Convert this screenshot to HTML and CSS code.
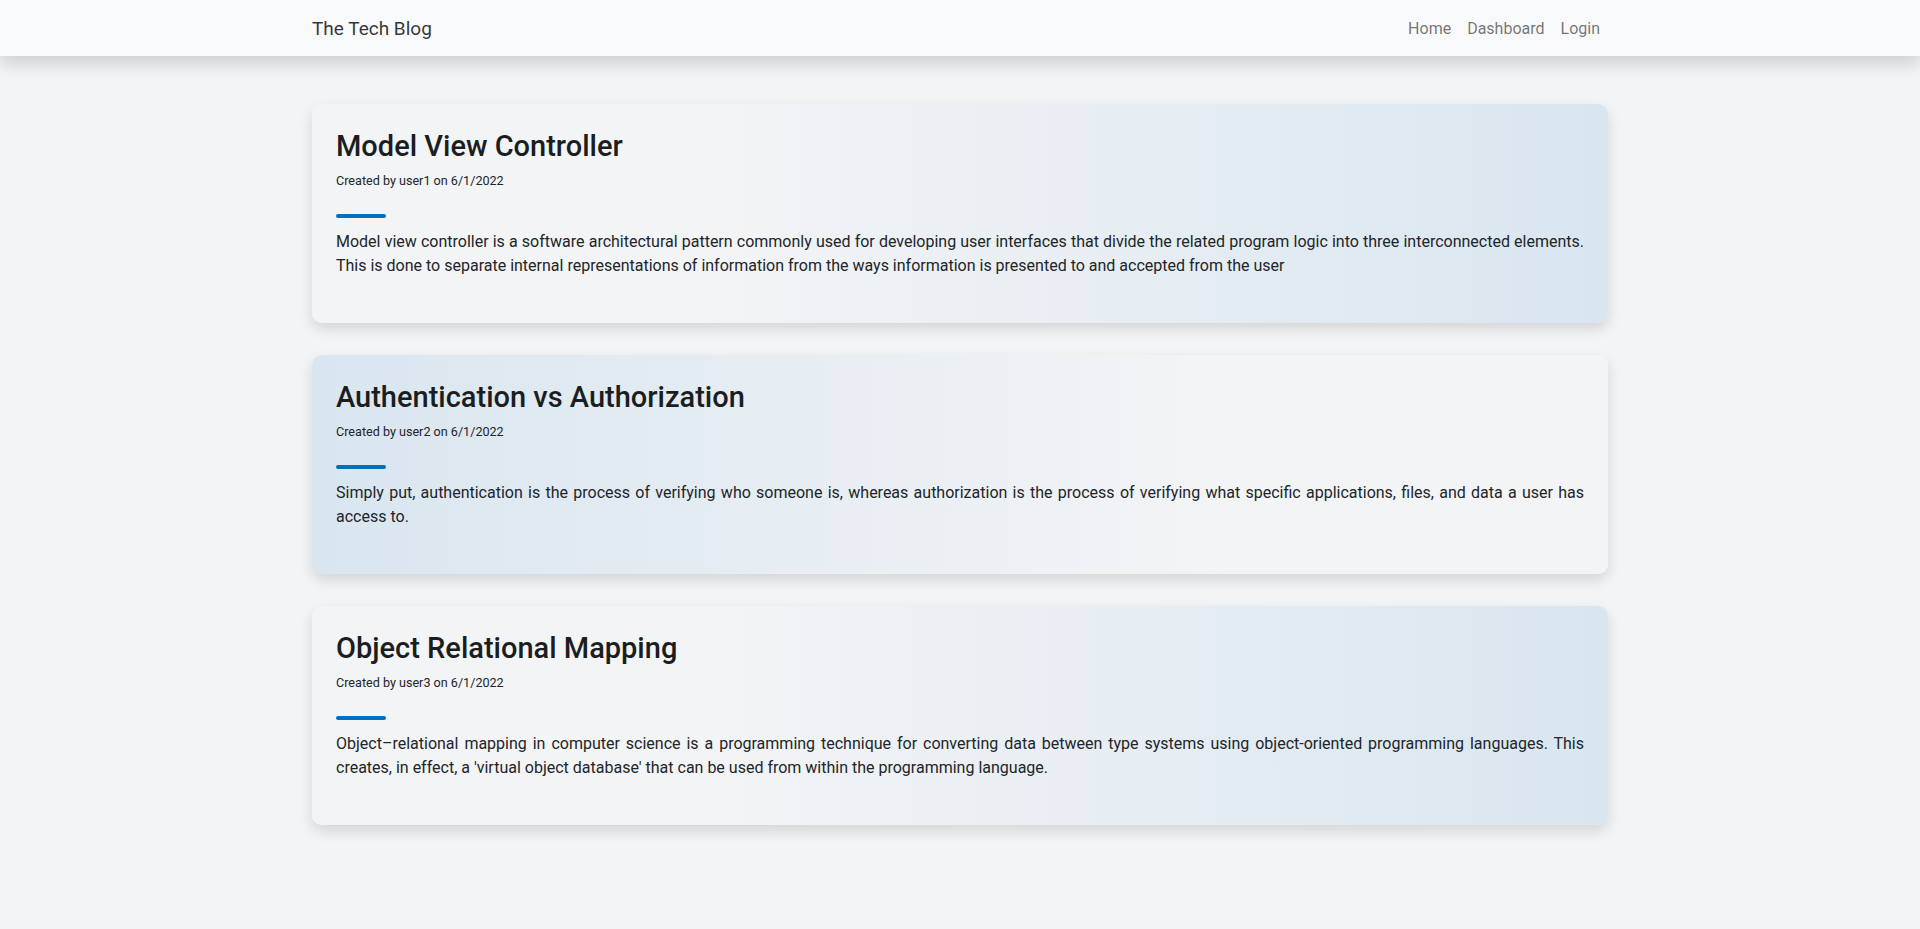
FILE: index.html
```html
<!DOCTYPE html>
<html lang="en">
<head>
<meta charset="utf-8">
<title>The Tech Blog</title>
<link rel="stylesheet" href="styles.css">
</head>
<body>
<header class="navbar">
  <div class="container nav-inner">
    <a class="brand" href="#">The Tech Blog</a>
    <nav class="nav-links">
      <a href="#">Home</a>
      <a href="#">Dashboard</a>
      <a href="#">Login</a>
    </nav>
  </div>
</header>
<main class="container posts">
  <article class="card grad-right">
    <h2 class="title">Model View Controller</h2>
    <p class="meta">Created by user1 on 6/1/2022</p>
    <div class="bar"></div>
    <p class="body">Model view controller is a software architectural pattern commonly used for developing user interfaces that divide the related program logic into three interconnected elements. This is done to separate internal representations of information from the ways information is presented to and accepted from the user</p>
  </article>
  <article class="card grad-left">
    <h2 class="title">Authentication vs Authorization</h2>
    <p class="meta">Created by user2 on 6/1/2022</p>
    <div class="bar"></div>
    <p class="body">Simply put, authentication is the process of verifying who someone is, whereas authorization is the process of verifying what specific applications, files, and data a user has access to.</p>
  </article>
  <article class="card grad-right">
    <h2 class="title">Object Relational Mapping</h2>
    <p class="meta">Created by user3 on 6/1/2022</p>
    <div class="bar"></div>
    <p class="body">Object–relational mapping in computer science is a programming technique for converting data between type systems using object-oriented programming languages. This creates, in effect, a 'virtual object database' that can be used from within the programming language.</p>
  </article>
</main>
</body>
</html>
```

FILE: styles.css
```css
* { box-sizing: border-box; }
html, body { margin: 0; padding: 0; }
body {
  background: #f3f4f6;
  font-family: Roboto, "Liberation Sans", sans-serif;
  color: #212529;
  font-size: 16px;
  line-height: 1.5;
}
.container {
  width: 1320px;
  margin: 0 auto;
  padding: 0 12px;
}
.navbar {
  background: #f8f9fa;
  box-shadow: 0 8px 16px rgba(0,0,0,0.15);
  padding: 8px 0;
  position: relative;
  z-index: 2;
}
.nav-inner {
  display: flex;
  justify-content: space-between;
  align-items: center;
}
.brand {
  font-size: 19px;
  line-height: 30px;
  padding: 6px 0 4px;
  color: rgba(0,0,0,0.8);
  text-decoration: none;
}
.nav-links { display: flex; }
.nav-links a {
  padding: 9px 8px 7px;
  color: rgba(0,0,0,0.55);
  text-decoration: none;
  font-size: 16px;
  line-height: 24px;
}
.posts {
  padding-top: 48px;
  padding-bottom: 48px;
  display: flex;
  flex-direction: column;
  gap: 32px;
}
.card {
  border-radius: 10px;
  padding: 23px 24px 25px;
  box-shadow: 0 6px 14px rgba(0,0,0,0.13);
}
.grad-right { background: linear-gradient(90deg, #f3f4f6 30%, #d9e6f0 100%); }
.grad-left { background: linear-gradient(90deg, #d9e6f0 0%, #f3f4f6 70%); }
.title {
  margin: 0 0 7px;
  font-size: 29px;
  font-weight: 500;
  line-height: 38px;
  color: #1b1e21;
}
.meta {
  margin: 0;
  font-size: 12.6px;
  line-height: 18px;
}
.bar {
  width: 50px;
  height: 4px;
  background: #0070c0;
  border-radius: 2px;
  margin: 24px 0 12px;
}
.body {
  margin: 0 0 20px;
  text-align: justify;
  line-height: 24px;
}
```
